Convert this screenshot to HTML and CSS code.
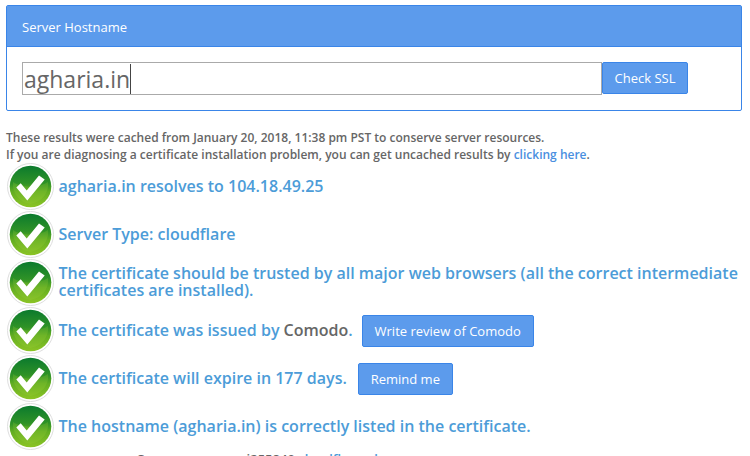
FILE: index.html
```html
<!DOCTYPE html>
<html lang="en">
<head>
<meta charset="utf-8">
<title>SSL Checker</title>
<link rel="stylesheet" href="styles.css">
</head>
<body>
<svg class="defs" width="0" height="0" aria-hidden="true">
  <defs>
    <linearGradient id="ball" x1="0" y1="0" x2="0" y2="1">
      <stop offset="0" stop-color="#0b7a2e"/>
      <stop offset="0.42" stop-color="#2f9226"/>
      <stop offset="0.62" stop-color="#62ad22"/>
      <stop offset="1" stop-color="#8cc425"/>
    </linearGradient>
    <symbol id="tick" viewBox="0 0 47 47">
      <circle cx="23.500" cy="23.500" r="23" fill="#fff" stroke="#dedede"/>
      <circle cx="23.500" cy="23.500" r="20.800" fill="url(#ball)"/>
      <path d="M6 19C14 25 32 25 41 19C42 27 38 38 23.500 41C11 39 5 29 6 19Z" fill="#9ed03a" fill-opacity="0.22"/>
      <path d="M9.300 24.500L13.700 20.200L19.700 27.500L32 12.500L37.700 16.500L20.300 37.500Z" fill="#fff"/>
    </symbol>
  </defs>
</svg>
<section class="panel">
  <h2 class="panel-head">Server Hostname</h2>
  <div class="panel-body">
    <div class="host-input"><span class="host-text">agharia.in</span><span class="caret"></span></div>
    <span class="btn btn-check">Check SSL</span>
  </div>
</section>
<p class="cache">These results were cached from January 20, 2018, 11:38 pm PST to conserve server resources.<br>If you are diagnosing a certificate installation problem, you can get uncached results by <a class="link" href="#">clicking here</a>.</p>
<ul class="checks">
  <li class="check"><svg class="tick"><use href="#tick"/></svg><span class="msg">agharia.in resolves to 104.18.49.25</span></li>
  <li class="check"><svg class="tick"><use href="#tick"/></svg><span class="msg">Server Type: cloudflare</span></li>
  <li class="check"><svg class="tick"><use href="#tick"/></svg><span class="msg msg-wide">The certificate should be trusted by all major web browsers (all the correct intermediate certificates are installed).</span></li>
  <li class="check"><svg class="tick"><use href="#tick"/></svg><span class="msg">The certificate was issued by <span class="brand">Comodo</span>.</span><span class="btn btn-review">Write review of Comodo</span></li>
  <li class="check"><svg class="tick"><use href="#tick"/></svg><span class="msg">The certificate will expire in 177 days.</span><span class="btn btn-remind">Remind me</span></li>
  <li class="check"><svg class="tick"><use href="#tick"/></svg><span class="msg">The hostname (agharia.in) is correctly listed in the certificate.</span></li>
</ul>
<div class="cert-row"><span class="cert-label">Common name:</span><span class="cert-value">sni255840.<a class="cert-link" href="#">cloudflaressl.com</a></span></div>
</body>
</html>
```
FILE: styles.css
```css
html, body { margin: 0; padding: 0; }
body {
  width: 750px;
  height: 456px;
  overflow: hidden;
  background: #fff;
  font-family: "Open Sans", sans-serif;
  color: #666;
}
.defs { position: absolute; }
.panel {
  margin: 5px 8px 0 6px;
  height: 106px;
  box-sizing: border-box;
  border: 1px solid #3a85e8;
  border-radius: 2px;
}
.panel-head {
  margin: 0;
  height: 41px;
  box-sizing: border-box;
  padding: 11px 15px 0;
  background: #5c9bec;
  border-bottom: 1px solid #3a85e8;
  color: #fff;
  font-size: 13px;
  line-height: 20px;
  font-weight: 400;
}
.panel-body {
  display: flex;
  align-items: flex-start;
  padding: 15px 15px 0;
}
.host-input {
  width: 580px;
  height: 33px;
  box-sizing: border-box;
  border: 1px solid #aaa;
  display: flex;
  align-items: center;
  padding-left: 1px;
  font-size: 23px;
  color: #666;
}
.caret {
  width: 1px;
  height: 30px;
  background: #444;
}
.btn {
  display: inline-block;
  box-sizing: border-box;
  background: #5c9bec;
  border: 1px solid #3a85e8;
  border-radius: 2px;
  color: #fff;
  font-size: 13px;
  font-weight: 400;
  text-align: center;
}
.btn-check { width: 86px; height: 32px; line-height: 30px; }
.cache {
  margin: 18px 0 0 6px;
  font-size: 12px;
  line-height: 17px;
  font-weight: 600;
  color: #666;
}
.link { color: #4a8fe0; text-decoration: none; }
.checks {
  list-style: none;
  margin: -1px 0 0;
  padding: 0 0 0 7px;
}
.check {
  display: flex;
  align-items: center;
  height: 48px;
}
.tick { width: 47px; height: 47px; flex: none; margin-right: 4.5px; }
.msg {
  font-size: 16px;
  line-height: 17px;
  font-weight: 600;
  color: #4c9cd8;
}
.msg-wide { width: 690px; }
.brand { color: #666; }
.btn-review { width: 172px; height: 32px; line-height: 30px; margin: 2px 0 0 9px; }
.btn-remind { width: 95px; height: 32px; line-height: 30px; margin: 2px 0 0 11px; }
.cert-row {
  display: flex;
  padding: 0 0 0 136px;
  font-size: 13px;
  font-weight: 600;
  line-height: 18px;
}
.cert-label { width: 96px; }
.cert-link { color: #4c9cd8; text-decoration: none; }
```
